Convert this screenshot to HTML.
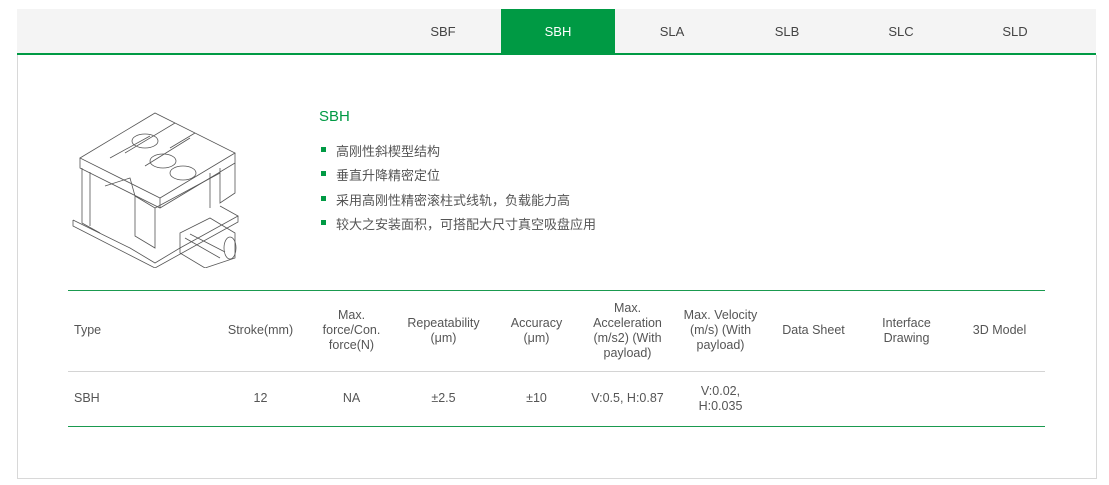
<!DOCTYPE html>
<html><head><meta charset="utf-8"><style>
*{margin:0;padding:0;box-sizing:border-box}
body{width:1109px;height:485px;background:#fff;font-family:"Liberation Sans","Noto Sans CJK SC",sans-serif;color:#555;font-size:12.5px;position:relative;overflow:hidden}
.bar{position:absolute;left:17px;top:9px;width:1079px;height:45px;background:#f4f4f4}
.tab{position:absolute;top:9px;height:45px;width:114px;line-height:45px;text-align:center;font-size:13px;color:#444}
.tab.on{background:#009a44;color:#fff}
.gl{position:absolute;left:17px;top:53px;width:1079px;height:2px;background:#009a44}
.box{position:absolute;left:17px;top:55px;width:1080px;height:424px;border:1px solid #d8d8d8;border-top:none}
.title{position:absolute;left:319px;top:108px;color:#009a44;font-size:15px}
.li{position:absolute;left:321px;font-size:13px;color:#555}
.li:before{content:"";position:absolute;left:0;top:6px;width:5px;height:5px;background:#009a44}
.li span{margin-left:15px}
.hl{position:absolute;left:68px;width:977px;height:1px}
.c{position:absolute;width:93px;text-align:center;line-height:15px}
</style></head><body>
<div class="bar"></div>
<div class="tab" style="left:386px">SBF</div>
<div class="tab on" style="left:501px">SBH</div>
<div class="tab" style="left:615px">SLA</div>
<div class="tab" style="left:730px">SLB</div>
<div class="tab" style="left:844px">SLC</div>
<div class="tab" style="left:958px">SLD</div>
<div class="gl"></div>
<div class="box"></div>
<svg style="position:absolute;left:70px;top:108px" width="180" height="160" viewBox="0 0 180 160" fill="none" stroke="#555" stroke-width="0.8">
<path d="M10 50 L85 5 L165 45 L90 90 Z"/>
<path d="M10 50 L10 60 L90 100 L165 55 L165 45"/>
<path d="M90 90 L90 100"/>
<ellipse cx="75" cy="33" rx="13" ry="7"/><ellipse cx="93" cy="53" rx="13" ry="7"/><ellipse cx="113" cy="65" rx="13" ry="7"/>
<path d="M55 45 L105 15 M40 50 L80 28 M75 58 L120 30 M100 40 L125 25"/>
<path d="M12 60 L12 115 L30 125 M20 64 L20 118 M65 88 L85 100 L85 140 L65 128 Z"/>
<path d="M150 60 L150 95 L165 85 L165 55 M140 65 L140 100"/>
<path d="M3 112 L60 140 L85 155 L110 140 L168 108 L150 98 M3 112 L3 118 L85 160 L168 114 L168 108"/>
<path d="M110 125 L140 110 L165 125 L165 150 L135 160 L110 145 Z"/>
<path d="M115 130 L150 150 M120 126 L155 144"/>
<ellipse cx="160" cy="140" rx="6" ry="11"/>
<path d="M85 100 L150 65 M35 78 L60 70 L65 88"/>
</svg>
<div class="title">SBH</div>
<div class="li" style="top:141px"><span>高刚性斜楔型结构</span></div>
<div class="li" style="top:165px"><span>垂直升降精密定位</span></div>
<div class="li" style="top:190px"><span>采用高刚性精密滚柱式线轨，负载能力高</span></div>
<div class="li" style="top:214px"><span>较大之安装面积，可搭配大尺寸真空吸盘应用</span></div>
<div class="hl" style="top:290px;background:#1a9a4f"></div>
<div class="hl" style="top:371px;background:#d4d4d4"></div>
<div class="hl" style="top:426px;background:#1a9a4f"></div>
<div class="c" style="left:74px;top:323px;text-align:left">Type</div>
<div class="c" style="left:214px;top:323px">Stroke(mm)</div>
<div class="c" style="left:305px;top:308px">Max.<br>force/Con.<br>force(N)</div>
<div class="c" style="left:397px;top:316px">Repeatability<br>(μm)</div>
<div class="c" style="left:490px;top:316px">Accuracy<br>(μm)</div>
<div class="c" style="left:581px;top:301px">Max.<br>Acceleration<br>(m/s2) (With<br>payload)</div>
<div class="c" style="left:674px;top:308px">Max. Velocity<br>(m/s) (With<br>payload)</div>
<div class="c" style="left:767px;top:323px">Data Sheet</div>
<div class="c" style="left:860px;top:316px">Interface<br>Drawing</div>
<div class="c" style="left:953px;top:323px">3D Model</div>
<div class="c" style="left:74px;top:391px;text-align:left">SBH</div>
<div class="c" style="left:214px;top:391px">12</div>
<div class="c" style="left:305px;top:391px">NA</div>
<div class="c" style="left:397px;top:391px">±2.5</div>
<div class="c" style="left:490px;top:391px">±10</div>
<div class="c" style="left:581px;top:391px">V:0.5, H:0.87</div>
<div class="c" style="left:674px;top:384px">V:0.02,<br>H:0.035</div>
</body></html>
